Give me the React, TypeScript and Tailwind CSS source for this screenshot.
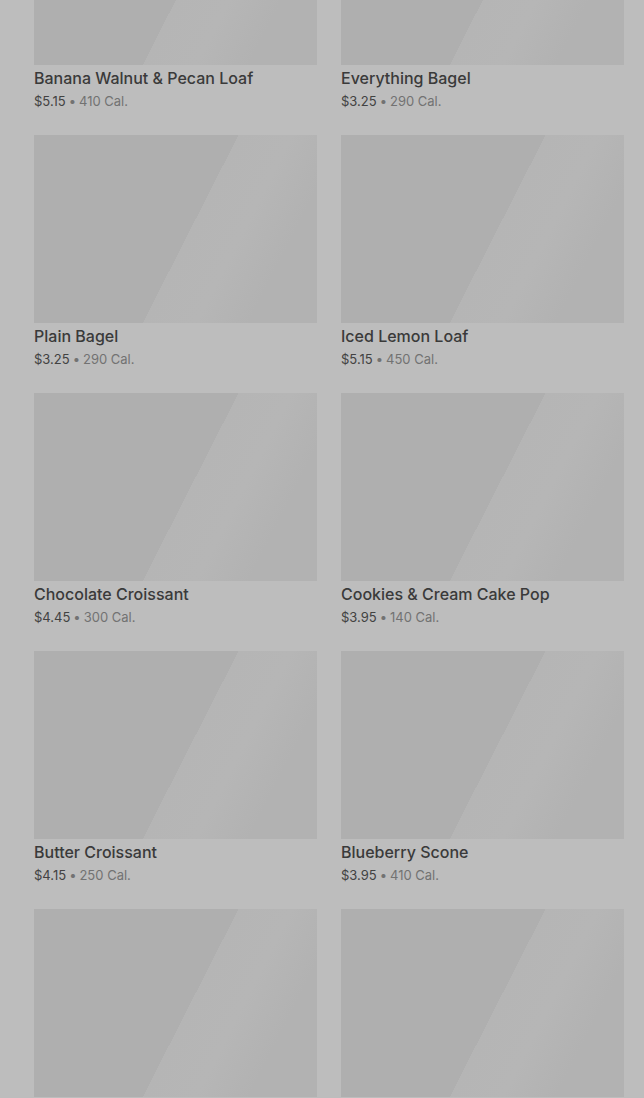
import React from "react";

interface Item {
  name?: string;
  price?: string;
  cal?: number;
}

const items: Item[] = [
  { name: "Banana Walnut & Pecan Loaf", price: "$5.15", cal: 410 },
  { name: "Everything Bagel", price: "$3.25", cal: 290 },
  { name: "Plain Bagel", price: "$3.25", cal: 290 },
  { name: "Iced Lemon Loaf", price: "$5.15", cal: 450 },
  { name: "Chocolate Croissant", price: "$4.45", cal: 300 },
  { name: "Cookies & Cream Cake Pop", price: "$3.95", cal: 140 },
  { name: "Butter Croissant", price: "$4.15", cal: 250 },
  { name: "Blueberry Scone", price: "$3.95", cal: 410 },
  {},
  {},
];

const ProductCard: React.FC<{ item: Item }> = ({ item }) => (
  <div className="flex flex-col">
    {/* image placeholder (loading shimmer) */}
    <div className="h-[188px] w-full bg-[linear-gradient(117deg,#afafaf_0%,#afafaf_54%,#b5b5b5_54%,#b6b6b6_68%,#b2b2b2_82%,#b2b2b2_100%)]" />
    {item.name && (
      <>
        <h3 className="mt-px text-[16px] font-medium leading-6 text-[#3a3a3a]">{item.name}</h3>
        <p className="mt-px text-[13px] leading-5 text-[#727272]">
          <span className="text-[#424242]">{item.price}</span>
          <span className="mx-[3px]">•</span>
          {item.cal} Cal.
        </p>
      </>
    )}
  </div>
);

export default function App() {
  return (
    <div
      className="h-[1098px] w-full overflow-hidden bg-[#bdbdbd]"
      style={{ fontFamily: "Inter, 'Noto Sans', sans-serif" }}
    >
      <div className="-mt-[123px] grid grid-cols-2 gap-x-6 gap-y-6 pl-[34px] pr-[20px]">
        {items.map((item, i) => (
          <ProductCard key={i} item={item} />
        ))}
      </div>
    </div>
  );
}
